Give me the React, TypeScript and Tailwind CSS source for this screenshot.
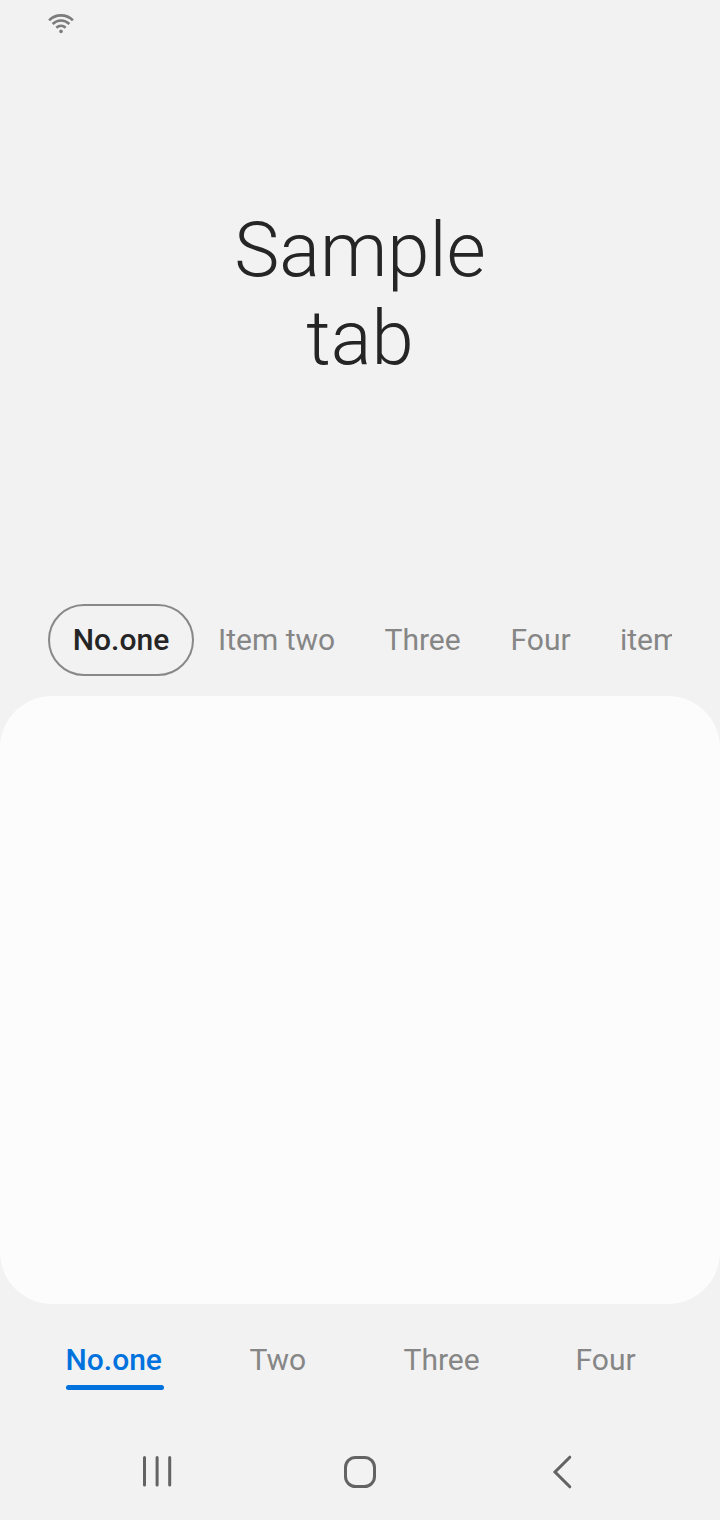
const topTabs = [
  { label: "Item two", cls: "ml-6 w-[117px]" },
  { label: "Three", cls: "ml-[49.5px] w-[76px]" },
  { label: "Four", cls: "ml-[50px] w-[59px]" },
  { label: "item five", cls: "ml-[50.5px]" },
];

export default function App() {
  return (
    <div className="flex h-[1520px] w-[720px] flex-col overflow-hidden bg-[#f2f2f2] font-[Roboto,sans-serif] text-[#252525]">
      <header className="flex h-12 shrink-0 px-12 pt-[13px]">
        <svg width="26" height="21" viewBox="0 0 26 21" fill="none" stroke="#7c7c7c" strokeWidth="2.6">
          <path d="M1.1 7.300C7.700.7 18.300.7 24.900 7.300" />
          <path d="M4.600 11c4.900-4.700 11.900-4.700 16.800 0" />
          <path d="M8.300 14.700c2.800-2.400 6.600-2.400 9.400 0" />
          <circle cx="13" cy="18.400" r="1.800" fill="#7c7c7c" stroke="none" />
        </svg>
      </header>
      <h1 className="h-[556px] shrink-0 pt-[158px] text-center text-[76px] leading-[88px] font-light">
        Sample
        <br />
        tab
      </h1>
      <nav className="mx-12 flex h-[72px] shrink-0 items-center overflow-hidden text-[30px] leading-[46px] whitespace-nowrap text-[#868686]">
        <button className="h-[72px] w-[146px] shrink-0 rounded-full border-2 border-[#888888] font-medium text-[#252525]">No.one</button>
        {topTabs.map((t) => (
          <button key={t.label} className={`shrink-0 text-left ${t.cls}`}>{t.label}</button>
        ))}
      </nav>
      <main className="mt-5 h-[608px] shrink-0 rounded-[52px] bg-[#fcfcfc]" />
      <nav className="flex h-[120px] shrink-0 pt-[33px] pl-[66px] text-[30px] leading-[46px] whitespace-nowrap text-[#868686]">
        <button className="flex w-[183.5px] flex-col items-start font-medium text-[#0072de]">
          <span className="-ml-[0.5px]">No.one</span>
          <span className="mt-[2px] h-[5px] w-[98px] rounded-full bg-[#0072de]" />
        </button>
        <button className="flex w-[154px]">Two</button>
        <button className="flex w-[172px]">Three</button>
        <button className="flex">Four</button>
      </nav>
      <footer className="flex h-24 shrink-0">
        <svg width="720" height="96" viewBox="0 1424 720 96" fill="none" stroke="#636363" strokeWidth="3" strokeLinecap="round">
          <path d="M144.500 1457.500v27.500M157.100 1457.500v27.500M169.700 1457.500v27.500" />
          <rect x="345.500" y="1457.500" width="29" height="29" rx="10" />
          <path d="M569.800 1457.200L555 1472l14.800 14.800" />
        </svg>
      </footer>
    </div>
  );
}
